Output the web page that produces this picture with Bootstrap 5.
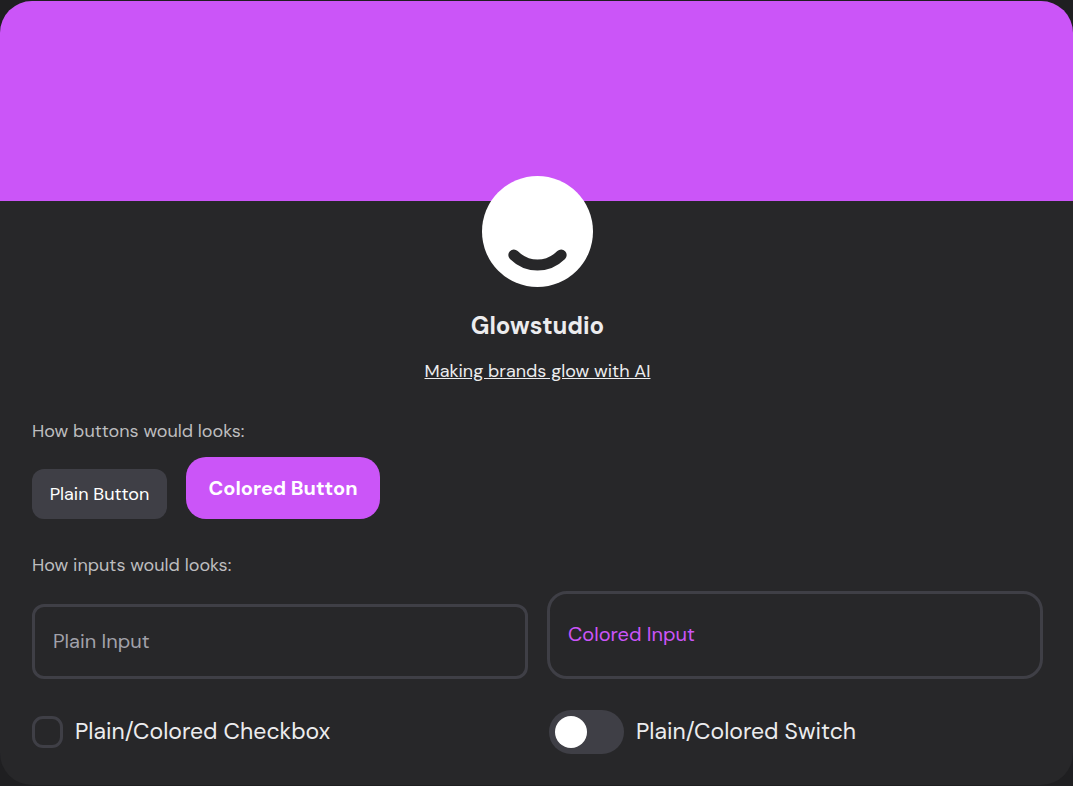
<!DOCTYPE html>
<html lang="en">
<head>
<meta charset="utf-8">
<meta name="viewport" content="width=device-width, initial-scale=1">
<title>Glowstudio</title>
<link href="https://cdn.jsdelivr.net/npm/bootstrap@5.3.0/dist/css/bootstrap.min.css" rel="stylesheet">
<style>
:root { --brand: #cb55f8; --panel: #272729; --line: #3f3f46; }
body { background: #1f1f21; color: #ececee; font-family: "DM Sans", Inter, sans-serif; }
.panel { background: var(--panel); border-radius: 32px; min-height: calc(100vh - 2px); margin: 1px 0; }
.cover { background: var(--brand); height: 200px; }
.panel-content { padding: 0 30px 31px 32px; }
.avatar { width: 111px; height: 111px; margin-top: -25px; }
.brand-name { font-size: 24px; line-height: 36px; margin: 21px 0 13px; }
.tagline { font-size: 18px; line-height: 28px; color: #ececee; }
.tagline:hover { color: #fff; }
.section-title { font-size: 18px; line-height: 28px; color: #bdbdbf; font-weight: 400; }
.gap-controls { gap: 19px; }
.btn-plain { --bs-btn-bg: #3f3f46; --bs-btn-color: #fff; --bs-btn-hover-bg: #4a4a52; --bs-btn-hover-color: #fff; --bs-btn-border-width: 0; --bs-btn-border-radius: 12px; --bs-btn-padding-x: 0; width: 135px; height: 50px; font-size: 18px; }
.btn-colored { --bs-btn-bg: var(--brand); --bs-btn-color: #fff; --bs-btn-hover-bg: #d470fa; --bs-btn-hover-color: #fff; --bs-btn-border-width: 0; --bs-btn-border-radius: 20px; --bs-btn-padding-x: 0; width: 194px; height: 62px; font-size: 20px; font-weight: 700; }
.field, .field:focus { background: transparent; border: 3px solid var(--line); color: #ececee; font-size: 20px; padding: 0 18px 2px; box-shadow: none; }
.field:focus { border-color: var(--brand); }
.field-plain { height: 75px; border-radius: 12px; }
.field-plain::placeholder { color: #a1a1aa; }
.field-colored, .field-colored:focus { height: 88px; border-radius: 20px; color: var(--brand); }
.field-colored::placeholder { color: var(--brand); opacity: 1; }
.options { margin-top: 31px; }
.option { min-height: 44px; gap: 12px; }
.option label { font-size: 23px; line-height: 32px; padding-bottom: 2px; }
.option .tick { width: 31px; height: 32px; border: 3px solid var(--line); border-radius: 11px; background-color: transparent; }
.option .tick:checked { background-color: var(--brand); border-color: var(--brand); }
.option .toggle { width: 75px; height: 44px; border: 0; border-radius: 22px; background-color: var(--line); background-size: 32px 32px; background-position: 6px center;
  background-image: url("data:image/svg+xml,%3Csvg xmlns='http://www.w3.org/2000/svg' viewBox='0 0 32 32'%3E%3Ccircle cx='16' cy='16' r='16' fill='white'/%3E%3C/svg%3E"); }
.option .toggle:checked { background-color: var(--brand); background-position: 37px center; }
.option-switch { padding-left: 4px; }
</style>
</head>
<body>
<main class="panel overflow-hidden">
  <div class="cover"></div>
  <div class="panel-content">
    <header class="d-flex flex-column align-items-center">
      <svg class="avatar position-relative" viewBox="0 0 111 111" role="img" aria-label="Glowstudio logo">
        <circle cx="55.5" cy="55.5" r="55.5" fill="#fff"/>
        <path d="M31.800 79Q42 89 55.500 89T79.200 79" fill="none" stroke="#272729" stroke-width="11" stroke-linecap="round"/>
      </svg>
      <h1 class="brand-name fw-bold">Glowstudio</h1>
      <a class="tagline" href="#">Making brands glow with AI</a>
    </header>
    <section class="pt-1">
      <h2 class="section-title mb-0 pt-1 mt-4">How buttons would looks:</h2>
      <div class="d-flex flex-wrap align-items-end gap-controls mt-2 pt-1">
        <button type="button" class="btn btn-plain">Plain Button</button>
        <button type="button" class="btn btn-colored">Colored Button</button>
      </div>
    </section>
    <section>
      <h2 class="section-title mb-0 mt-4 pt-2">How inputs would looks:</h2>
      <div class="d-flex align-items-end gap-controls mt-2 pt-1">
        <input type="text" class="form-control field field-plain" placeholder="Plain Input" aria-label="Plain Input">
        <input type="text" class="form-control field field-colored" placeholder="Colored Input" aria-label="Colored Input">
      </div>
      <div class="options row g-0 gap-controls flex-nowrap">
        <div class="col option d-flex align-items-center">
          <input class="form-check-input tick m-0 flex-shrink-0" type="checkbox" id="checkbox-demo">
          <label for="checkbox-demo">Plain/Colored Checkbox</label>
        </div>
        <div class="col option option-switch d-flex align-items-center">
          <input class="form-check-input toggle m-0 flex-shrink-0" type="checkbox" role="switch" id="switch-demo">
          <label for="switch-demo">Plain/Colored Switch</label>
        </div>
      </div>
    </section>
  </div>
</main>
<script src="https://cdn.jsdelivr.net/npm/bootstrap@5.3.0/dist/js/bootstrap.bundle.min.js"></script>
</body>
</html>
